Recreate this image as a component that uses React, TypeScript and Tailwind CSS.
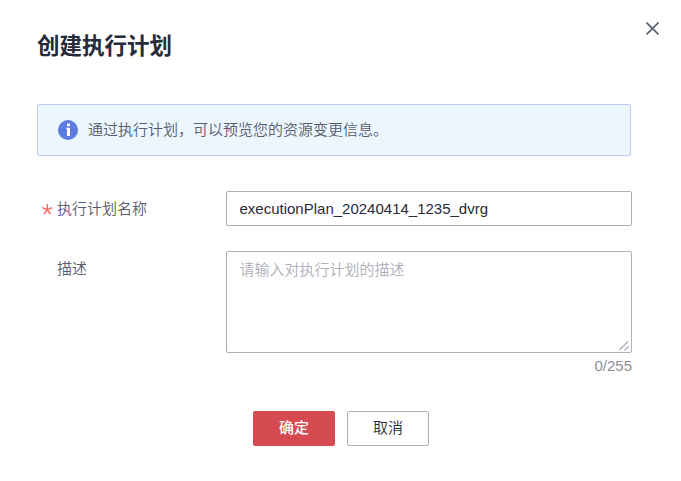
export default function App() {
  return (
    <main className="flex h-[481px] w-[681px] flex-col bg-white pl-[37px] pr-[49px] font-['Liberation_Sans','Noto_Sans_CJK_SC',sans-serif] text-[15px] font-[350] text-[#575d6c]">
      <header className="-mr-[35px] flex h-[104px] shrink-0 items-start justify-between">
        <h1 className="mt-[30px] text-[22.5px] font-bold leading-[34px] text-[#252b3a]">创建执行计划</h1>
        <button aria-label="关闭" className="mt-[22px] mr-[8px]">
          <svg className="block size-[13px]" viewBox="0 0 13 13" fill="none" stroke="#575d6c" strokeWidth="1.6">
            <path d="M.5 .5 12.5 12.5M12.5 .5 .5 12.5" />
          </svg>
        </button>
      </header>
      <div className="flex h-[52px] w-[594px] shrink-0 items-center gap-[10px] rounded-[2px] border border-[#beccfa] bg-[#ebf6ff] pl-5">
        <svg className="size-5" viewBox="0 0 20 20">
          <circle cx="10" cy="10" r="10" fill="#5e7ce0" />
          <rect x="9" y="3.6" width="3" height="2.6" rx=".7" fill="#fff" />
          <path d="M8 7.7H12V16H9V9H8Z" fill="#fff" />
        </svg>
        <span>通过执行计划，可以预览您的资源变更信息。</span>
      </div>
      <label className="mt-[35px] flex h-[35px] w-[595px] shrink-0 items-center">
        <span className="flex w-[189px] items-center pt-px">
          <span className="flex w-5 pl-[5px]">
            <svg className="size-[11px]" viewBox="0 0 11 11" fill="none" stroke="#f66f6a" strokeWidth="1.5">
              <path d="M5.3 0V5.5M.3 3.8 5.3 5.5 10.3 3.8M2.2 10 5.3 5.5 8.4 10" />
            </svg>
          </span>
          执行计划名称
        </span>
        <input className="h-[35px] w-[406px] rounded-[2px] border border-[#adb0b8] px-[12.5px] text-[#252b3a] outline-none" defaultValue="executionPlan_20240414_1235_dvrg" />
      </label>
      <label className="mt-[25px] flex h-[102px] w-[595px] shrink-0 items-start">
        <span className="w-[189px] pt-[6px] pl-5 leading-[23px]">描述</span>
        <span className="flex h-[102px] w-[406px] items-end rounded-[2px] border border-[#adb0b8]">
          <textarea className="h-full flex-1 resize-none pt-[6px] pl-[12.5px] leading-[23px] placeholder:text-[#adb0b8] outline-none" placeholder="请输入对执行计划的描述" />
          <svg className="-ml-3 size-3" viewBox="0 0 12 12" stroke="#adb0b8" strokeWidth="1.3">
            <path d="M.5 10 9 1.5M5.5 10.5 9.7 6.3" />
          </svg>
        </span>
      </label>
      <div className="mt-px h-[23px] w-[595px] shrink-0 text-right leading-[23px] text-[#8a8e99]">0/255</div>
      <footer className="mt-[34px] flex shrink-0 gap-3 pl-[216px]">
        <button className="h-[35px] w-[82px] rounded-[2px] bg-[#d64a52] font-medium text-white">确定</button>
        <button className="h-[35px] w-[82px] rounded-[2px] border border-[#adb0b8] text-[#252b3a]">取消</button>
      </footer>
    </main>
  );
}
